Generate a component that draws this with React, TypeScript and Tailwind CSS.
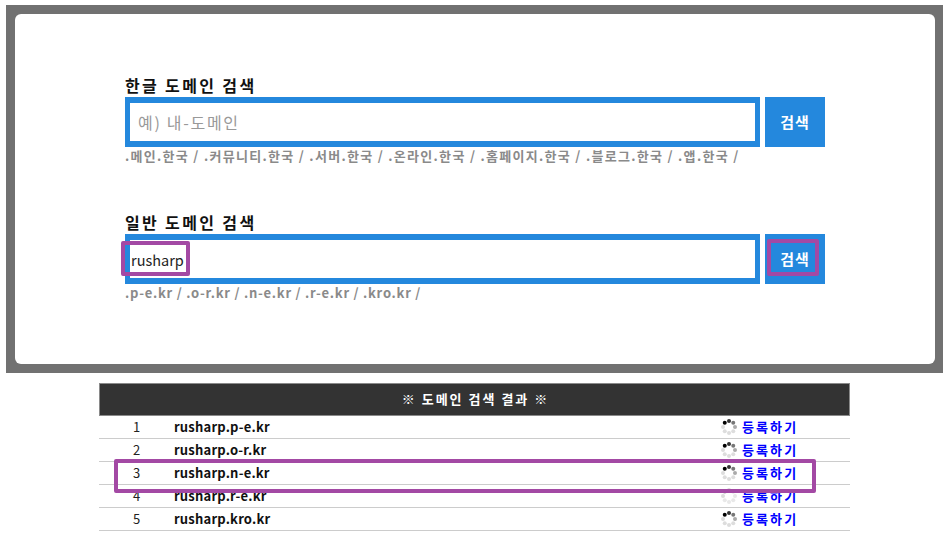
const font = "font-['Noto_Sans_CJK_KR','Noto_Sans',sans-serif]";

function Spinner({ faded = false }: { faded?: boolean }) {
  const shades = faded
    ? ["#d8d8d8", "#e4e4e4", "#e8e8e8", "#e8e8e8", "#e8e8e8", "#e8e8e8", "#dcdcdc", "#bdbdbd"]
    : ["#333", "#777", "#aaa", "#ddd", "#ddd", "#ddd", "#ddd", "#000"];
  return (
    <svg width="16" height="16" viewBox="0 0 16 16" className="shrink-0">
      {shades.map((c, i) => {
        const a = (i * Math.PI) / 4 - Math.PI / 2;
        return <circle key={i} cx={8 + 6 * Math.cos(a)} cy={8 + 6 * Math.sin(a)} r="2" fill={c} />;
      })}
    </svg>
  );
}

function SearchBlock({
  title,
  placeholder,
  value,
  hint,
  mt,
  inputPad,
  hintTrack,
}: {
  title: string;
  placeholder?: string;
  value?: string;
  hint: string;
  mt: string;
  inputPad: string;
  hintTrack: string;
}) {
  return (
    <div className={mt}>
      <h2 className="pb-[2px] text-[16px] leading-[19px] font-bold tracking-[2.35px] text-[#111]">{title}</h2>
      <div className="flex gap-[5px]">
        <input
          readOnly
          value={value}
          placeholder={placeholder}
          className={`h-[50px] w-[635px] border-x-[5px] border-y-[6px] border-[#2488dd] bg-white outline-none text-[14.5px] text-[#222] placeholder:text-[16px] placeholder:tracking-[1.7px] placeholder:text-[#999] ${inputPad} ${font}`}
        />
        <button className="h-[50px] w-[60px] bg-[#2488dd] text-[15px] font-bold tracking-[1px] text-white">검색</button>
      </div>
      <p className={`text-[13px] leading-[17px] font-bold text-[#8a8a8a] ${hintTrack}`}>{hint}</p>
    </div>
  );
}

const rows = [
  ["1", "rusharp.p-e.kr"],
  ["2", "rusharp.o-r.kr"],
  ["3", "rusharp.n-e.kr"],
  ["4", "rusharp.r-e.kr"],
  ["5", "rusharp.kro.kr"],
];

export default function App() {
  return (
    <div className={`relative h-[535px] w-[949px] overflow-hidden bg-white ${font}`}>
      <div className="pt-[5px] pl-[6px]">
        <div className="h-[368px] w-[937px] bg-[#717171] pt-[9px] pl-[9px]">
          <div className="h-[350px] w-[920px] rounded-[6px] bg-white pt-[62px] pl-[110px]">
            <SearchBlock
              mt="mt-0"
              inputPad="pl-[8px]"
              hintTrack="tracking-[1.3px]"
              title="한글 도메인 검색"
              placeholder="예) 내-도메인"
              hint=".메인.한국 / .커뮤니티.한국 / .서버.한국 / .온라인.한국 / .홈페이지.한국 / .블로그.한국 / .앱.한국 /"
            />
            <SearchBlock
              mt="mt-[49px]"
              inputPad="pl-[1px]"
              hintTrack="tracking-[0.75px]"
              title="일반 도메인 검색"
              value="rusharp"
              hint=".p-e.kr / .o-r.kr / .n-e.kr / .r-e.kr / .kro.kr /"
            />
          </div>
        </div>
      </div>

      <div className="mt-[10px] ml-[99px] w-[751px]">
        <div className="flex h-[33px] items-center justify-center border border-[#8a8a8a] bg-[#333] pb-[2px] pl-[2px] text-[13px] font-bold tracking-[2px] text-white">
          ※ 도메인 검색 결과 ※
        </div>
        {rows.map(([n, d], i) => (
          <div key={n} className="flex h-[23px] items-center border-b border-[#ccc]">
            <span className="w-[75px] text-center text-[13px] text-[#222]">{n}</span>
            <span className="w-[547px] text-[13px] font-bold tracking-[0.2px] text-[#111]">{d}</span>
            <Spinner faded={i === 3} />
            <a className="ml-[5px] text-[13px] font-bold tracking-[2.1px] text-[#0000ff]">등록하기</a>
          </div>
        ))}
      </div>

      <div className="absolute top-[241px] left-[121px] h-[35px] w-[69px] rounded-[2px] border-4 border-[#a349a4]" />
      <div className="absolute top-[239px] left-[767px] h-[37px] w-[52px] rounded-[2px] border-4 border-[#a349a4]" />
      <div className="absolute top-[459px] left-[114px] h-[34px] w-[702px] rounded-[2px] border-4 border-[#a349a4]" />
    </div>
  );
}
